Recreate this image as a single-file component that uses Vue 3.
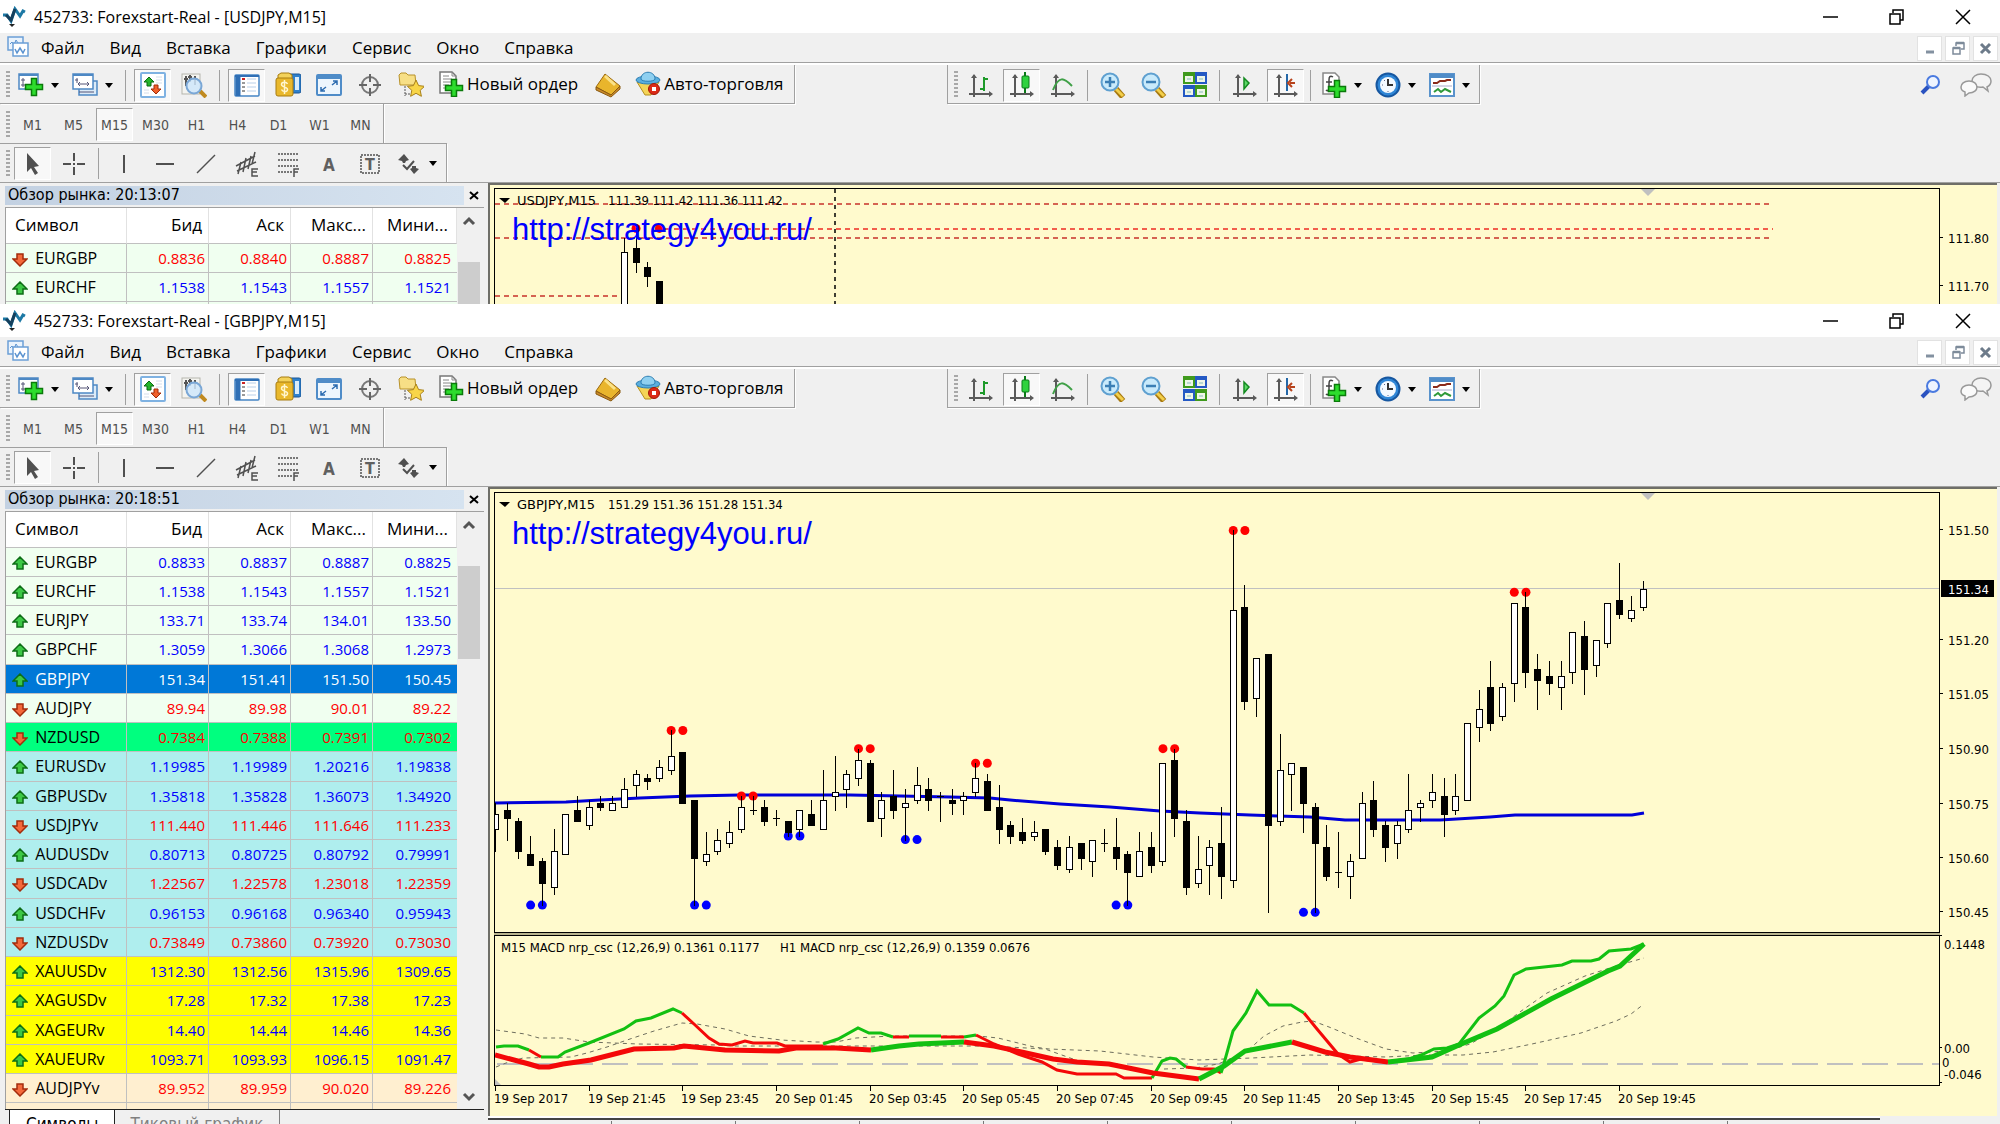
<script setup>
const STEP = 11.71;

// 26x26 toolbar glyphs
const plusShape = 'd="M13.500 8.500h5v6h6v5h-6v6h-5v-6h-6v-5h6z" fill="#2ddc2d" stroke="#0a7a0a" stroke-width="1.500"';
const plus = `<path ${plusShape}/>`;
const axes = '<path d="M6 3v22M1 22h22" stroke="#5a5a5a" stroke-width="2" fill="none"/><path d="M3 6l3-4 3 4zM21 19l4 3-4 3z" fill="#5a5a5a"/>';
const lens = '<path d="M16 17l7 8" stroke="#a87a10" stroke-width="6"/><path d="M16 17l7 7" stroke="#f3cf4a" stroke-width="3"/><circle cx="10" cy="10" r="8.500" fill="#c9eafb" stroke="#5fa0d0" stroke-width="2"/>';
const icons = {
  newChart: `<rect x="1" y="2" width="19" height="15" fill="#fff" stroke="#4d88c4" stroke-width="1.500"/><path d="M1 3h19" stroke="#4d88c4" stroke-width="2"/><path d="M5 6v9M3 13h8M3 8h4" stroke="#557"/><path ${plusShape} transform="translate(0 -2)"/>`,
  profiles: '<rect x="7" y="9" width="18" height="14" fill="#dcebf8" stroke="#4d88c4" stroke-width="1.500"/><rect x="1" y="2" width="20" height="15" fill="#fff" stroke="#4d88c4" stroke-width="1.500"/><path d="M1 3h20" stroke="#4d88c4" stroke-width="2"/><path d="M5 6v5M3 8h3M6 12h11M8 10l-2 2 2 2M15 10l2 2-2 2M7 20h15" stroke="#557" fill="none"/>',
  market: '<rect x="1" y="1" width="24" height="24" rx="1" fill="#fff" stroke="#7fb2e2" stroke-width="2"/><path d="M4 10l5-5 5 5h-3v4H7v-4z" fill="#25b52b" stroke="#0b6a10"/><path d="M11 17l5 5 5-5h-3v-4h-4v4z" fill="#f0602a" stroke="#a02a08"/><path d="M16 5h6M16 8h6M16 11h6M4 18h5M4 21h5" stroke="#d5deea"/>',
  dataWindow: '<rect x="1" y="2" width="18" height="20" fill="#f4f4f0" stroke="#b5b5ad"/><path d="M5 4v10M9 3v7M14 4v9M3 7h4M7 5h4M12 7h4" stroke="#555" stroke-width="2"/><path d="M19 19l6 6" stroke="#c08a20" stroke-width="4"/><circle cx="13" cy="14" r="7.500" fill="#cfe6fa" fill-opacity=".85" stroke="#7aa7d6" stroke-width="2"/>',
  navigator: '<rect x="1" y="3" width="24" height="21" rx="1" fill="#fff" stroke="#4585c5" stroke-width="1.500"/><path d="M4 3v21" stroke="#2f6fb5" stroke-width="5"/><path d="M1 4h24" stroke="#2f6fb5" stroke-width="2"/><path d="M8 7h3" stroke="#c22" stroke-width="2"/><path d="M8 11h3M8 15h3M8 19h3" stroke="#333"/><path d="M13 7h9M13 11h9M13 15h9M13 19h9" stroke="#b9cfe8"/>',
  terminal: '<rect x="9" y="2" width="17" height="19" rx="2" fill="#2f80cc" stroke="#1a5796"/><path d="M20 5h4v13h-4z" fill="#d8ecfb"/><path d="M3 3l3-2h8l3 2v4H3z" fill="#f3d25a" stroke="#a87c10"/><rect x="1" y="6" width="17" height="18" rx="2" fill="#e9b82c" stroke="#a87c10"/><path d="M12.500 12c-1-2.500-6-2.500-6 .5s6 2 6 5-5 2.500-6 0M9.500 8v14" fill="none" stroke="#fff6cf" stroke-width="1.500"/>',
  fullscreen: '<rect x="1" y="3" width="24" height="20" rx="1" fill="#eef6fd" stroke="#4f8cc8" stroke-width="2"/><path d="M1 5h24" stroke="#4f8cc8" stroke-width="4"/><path d="M16 13l5-4M17 9h4v4M10 15l-5 4M9 19H5v-4" fill="none" stroke="#2d6cb0" stroke-width="1.500"/>',
  target: '<circle cx="13" cy="13" r="8" fill="none" stroke="#777" stroke-width="2"/><path d="M13 2v8M13 16v8M2 13h8M16 13h8" stroke="#666" stroke-width="2"/>',
  favorites: '<path d="M1 3l2-2h5l2 2h7l1 10H2z" fill="#f7df86" stroke="#b8922a"/><path d="M7 14v10M7 22h5" stroke="#555" stroke-dasharray="2 1"/><path d="M18 8l2.600 5.600 6 .7-4.400 4 1.200 6-5.400-3-5.400 3 1.200-6-4.400-4 6-.7z" fill="#f8d548" stroke="#a8801a"/>',
  order: '<path d="M2 1h12l4 4v17H2z" fill="#fff" stroke="#777" stroke-width="1.500"/><path d="M14 1v4h4M5 5h6M5 8h9M5 11h9M5 14h6M5 17h5" stroke="#888" fill="none"/>' + plus,
  book: '<path d="M10 2l15 12-9 9L1 15z" fill="#e9b52c" stroke="#9c6a10"/><path d="M1 15l15 8 9-9v3l-9 8L1 18z" fill="#c9892a" stroke="#8a5a10"/><path d="M10 4l10 9" stroke="#fbe288" stroke-width="3"/>',
  expert: '<path d="M2 11h22l-8 13h-6z" fill="#f4d457" stroke="#b58f1e"/><ellipse cx="13" cy="9" rx="12" ry="4" fill="#5aaede" stroke="#2d7eb2"/><path d="M6 8c0-9 14-9 14 0 0 3-14 3-14 0z" fill="#8fd0f0" stroke="#2d7eb2"/><circle cx="19" cy="18" r="5.500" fill="#dc2a16" stroke="#a31608"/><rect x="17" y="16" width="4" height="4" fill="#fff"/>',
  bars: axes + '<path d="M16 5v14M16 7h4M12 17h4" stroke="#1e9a2a" stroke-width="2" fill="none"/>',
  candles: axes + '<path d="M16 0v21" stroke="#0b7a18" stroke-width="2"/><rect x="13" y="4" width="7" height="12" rx="1" fill="#2fd23e" stroke="#0b7a18"/>',
  line: axes + '<path d="M3 18C9 3 14 6 22 14" stroke="#3fa047" stroke-width="2" fill="none"/>',
  zoomIn: lens + '<path d="M10 5v10M5 10h10" stroke="#3b7fb5" stroke-width="2.500"/>',
  zoomOut: lens + '<path d="M5 10h10" stroke="#3b7fb5" stroke-width="2.500"/>',
  tile: '<rect x="1" y="0" width="12" height="12" fill="#3f9a1d"/><rect x="13" y="0" width="12" height="12" fill="#2459c4"/><rect x="1" y="13" width="12" height="12" fill="#2459c4"/><rect x="13" y="13" width="12" height="12" fill="#3f9a1d"/><path d="M3 4h8v6H3zM15 4h8v6h-8zM3 17h8v6H3zM15 17h8v6h-8z" fill="#eef6e8"/><path d="M5 7h4M17 7h4M5 20h4M17 20h4" stroke="#8bb"/>',
  scroll: axes + '<path d="M12 6l5 5-5 6z" fill="#5cd867" stroke="#138a20" stroke-width="1.500"/>',
  shift: axes + '<path d="M14 2v17" stroke="#2468a8" stroke-width="2"/><path d="M22 11h-5M19 7l-4 4 4 4" fill="none" stroke="#b8431c" stroke-width="2"/>',
  indicators: '<path d="M2 1h12l4 4v17H2z" fill="#fff" stroke="#888" stroke-width="1.500"/><path d="M12 5c-3-2-4 0-4 3v8c0 3-2 3-3 2M5 10h6" fill="none" stroke="#444" stroke-width="1.500"/>' + plus,
  clock: '<circle cx="13" cy="13" r="11.500" fill="#2f86d6" stroke="#1757a0" stroke-width="2"/><circle cx="13" cy="13" r="8" fill="#f3f9ff"/><path d="M13 7v6h5" fill="none" stroke="#333" stroke-width="2"/><path d="M7 13h1M13 19v1M9 8l1 1" stroke="#668"/>',
  template: '<rect x="1" y="2" width="24" height="22" fill="#fff" stroke="#5a93cc" stroke-width="2"/><path d="M1 4h24" stroke="#4f8cc8" stroke-width="4"/><path d="M4 11h4l3-2h5l2-1h4" fill="none" stroke="#8a2a1a" stroke-width="2"/><path d="M3 14h20" stroke="#aac"/><path d="M5 20l4-3 3 3 4-3 2 1 4 2" fill="none" stroke="#2f9a3a" stroke-width="2"/>',
  cursor: '<path d="M7 2v19l4-4 4 7 3-2-4-6 5-1z" fill="#505050"/>',
  cross: '<path d="M13 2v8M13 16v8M2 13h8M16 13h8M12 13h2" stroke="#505050" stroke-width="2"/>',
  vline: '<path d="M13 4v18" stroke="#505050" stroke-width="2"/>',
  hline: '<path d="M4 13h18" stroke="#505050" stroke-width="2"/>',
  trend: '<path d="M4 22L22 4" stroke="#505050" stroke-width="1.500"/>',
  channel: '<path d="M2 15L21 5M3 20L22 11M7 11L4 23M12 7L9 21M17 5l-3 13M21 1l-3 12" fill="none" stroke="#505050" stroke-width="1.500"/><path d="M24 18h-6v7h6M18 21h5" fill="none" stroke="#505050" stroke-width="1.500"/>',
  fibo: '<path d="M3 3h20M3 9h20M3 15h20M3 21h14" stroke="#505050" stroke-width="1.500" stroke-dasharray="2 1"/><path d="M19 26v-8h5M19 21h4" fill="none" stroke="#505050" stroke-width="1.500"/>',
  textA: '<text x="13" y="20" text-anchor="middle" font-family="DejaVu Sans Condensed, sans-serif" font-weight="bold" font-size="17" fill="#606060">A</text>',
  textT: '<rect x="4" y="4" width="18" height="18" fill="none" stroke="#505050" stroke-width="1.500" stroke-dasharray="2 1"/><text x="13" y="19" text-anchor="middle" font-family="DejaVu Sans Condensed, sans-serif" font-weight="bold" font-size="16" fill="#606060">T</text>',
  shapes: '<path d="M2 9l6-6 5 6-3 1-1 2H7l-1-2zM14 18l2-1v-2h4v2l3 1-5 5z" fill="#505050"/><path d="M7 14l4 4 7-8" fill="none" stroke="#505050" stroke-width="2"/>',
};

const menu = ["Файл", "Вид", "Вставка", "Графики", "Сервис", "Окно", "Справка"];
const frames = ["M1", "M5", "M15", "M30", "H1", "H4", "D1", "W1", "MN"];

const mainTools = [
  { icon: "newChart", label: "Новый график", drop: true },
  { icon: "profiles", label: "Профили", drop: true },
  { sep: true },
  { icon: "market", label: "Обзор рынка", on: true },
  { icon: "dataWindow", label: "Окно данных" },
  { sep: true },
  { icon: "navigator", label: "Навигатор", on: true },
  { icon: "terminal", label: "Терминал" },
  { icon: "fullscreen", label: "Полный экран" },
  { icon: "target", label: "Перекрестие" },
  { icon: "favorites", label: "Избранное" },
  { icon: "order", text: "Новый ордер" },
  { icon: "book", label: "MetaEditor" },
  { icon: "expert", text: "Авто-торговля" },
];
const chartTools = [
  { icon: "bars", label: "Бары" },
  { icon: "candles", label: "Свечи", on: true },
  { icon: "line", label: "Линия" },
  { sep: true },
  { icon: "zoomIn", label: "Увеличить" },
  { icon: "zoomOut", label: "Уменьшить" },
  { icon: "tile", label: "Расположить окна" },
  { sep: true },
  { icon: "scroll", label: "Автопрокрутка" },
  { icon: "shift", label: "Сдвиг графика", on: true },
  { sep: true },
  { icon: "indicators", label: "Индикаторы", drop: true },
  { icon: "clock", label: "Периоды", drop: true },
  { icon: "template", label: "Шаблоны", drop: true },
];
const drawTools = [
  { icon: "cursor", label: "Курсор", on: true },
  { icon: "cross", label: "Крест" },
  { sep: true },
  { icon: "vline", label: "Вертикальная линия" },
  { icon: "hline", label: "Горизонтальная линия" },
  { icon: "trend", label: "Трендовая линия" },
  { icon: "channel", label: "Канал" },
  { icon: "fibo", label: "Фибоначчи" },
  { icon: "textA", label: "Текст" },
  { icon: "textT", label: "Метка" },
  { icon: "shapes", label: "Фигуры", drop: true },
];

// [open, high, low, close], hundredths above the base price
const gbpjpy = [
  [68, 75, 62, 72], [73, 75, 65, 71], [70, 71, 60, 62], [61, 66, 58, 58], [59, 60, 47, 53],
  [52, 68, 50, 62], [61, 72, 61, 72], [73, 77, 70, 70], [69, 76, 68, 74], [75, 77, 73, 74],
  [73, 77, 73, 75], [74, 82, 74, 79], [80, 84, 77, 83], [82, 83, 79, 81], [82, 87, 81, 85],
  [84, 95, 83, 88], [89, 89, 75, 75], [76, 76, 47, 60], [59, 67, 58, 61], [62, 68, 61, 65],
  [64, 70, 63, 67], [68, 77, 67, 74], [73, 77, 72, 73], [74, 76, 69, 70], [71, 73, 69, 71],
  [70, 70, 66, 67], [68, 73, 66, 73], [72, 76, 69, 69], [68, 84, 68, 76], [77, 88, 73, 78],
  [79, 84, 74, 83], [82, 90, 80, 87], [86, 87, 70, 70], [71, 78, 66, 76], [77, 84, 71, 73],
  [74, 79, 65, 75], [76, 85, 75, 80], [79, 82, 73, 76], [77, 78, 70, 77], [76, 79, 72, 75],
  [76, 78, 72, 77], [78, 86, 77, 82], [81, 83, 73, 73], [74, 80, 64, 68], [69, 70, 64, 66],
  [67, 71, 64, 65], [66, 70, 65, 67], [68, 68, 61, 62], [63, 65, 57, 58], [57, 66, 56, 63],
  [64, 64, 57, 60], [59, 65, 55, 65], [64, 68, 62, 64], [63, 71, 57, 60], [61, 62, 47, 56],
  [55, 67, 55, 62], [63, 67, 56, 58], [59, 86, 58, 86], [87, 90, 66, 71], [70, 73, 50, 52],
  [53, 66, 52, 57], [58, 65, 50, 63], [64, 74, 49, 55], [54, 150, 52, 128], [129, 135, 101, 103],
  [104, 115, 99, 115], [116, 116, 45, 69], [70, 94, 69, 84], [83, 86, 73, 86], [85, 85, 67, 75],
  [74, 75, 45, 64], [63, 69, 54, 55], [56, 67, 52, 56], [55, 61, 49, 59], [60, 78, 60, 75],
  [76, 81, 66, 68], [69, 70, 59, 63], [64, 70, 60, 69], [68, 83, 67, 73], [74, 76, 70, 75],
  [76, 83, 74, 78], [77, 82, 66, 72], [73, 83, 72, 77], [76, 97, 76, 97], [96, 106, 92, 101],
  [107, 114, 95, 97], [99, 108, 98, 107], [108, 130, 103, 130], [129, 133, 107, 111], [112, 116, 101, 109],
  [110, 114, 105, 108], [107, 114, 101, 110], [111, 122, 108, 122], [121, 125, 105, 112], [113, 120, 110, 120],
  [119, 130, 118, 130], [131, 141, 126, 127], [126, 132, 125, 128], [129, 136, 128, 134],
].map((c, i) => [i, ...c]);
const usdjpy = [
  [11, 50, 80, 50, 77],
  [12, 78, 82, 73, 75],
  [13, 74, 75, 70, 72],
  [14, 71, 71, 50, 50],
];

function buildCandles(list, zero, scale) {
  return list.map(([i, open, high, low, close]) => {
    const y = (p) => Math.round(zero - p * scale);
    const top = y(Math.max(open, close));
    const bottom = y(Math.min(open, close));
    return {
      i,
      x: Math.round(i * STEP),
      top,
      height: bottom - top,
      high: y(high),
      low: y(low),
      up: close > open,
    };
  });
}

function buildDots(list, zero, scale) {
  return list.map(([i, p, color]) => ({ x: i * STEP + 0.5, y: zero - p * scale, color }));
}

const RED = "#ff0000";
const BLUE = "#0000ff";
const pairs = (first, price, color) => [[first, price, color], [first + 1, price, color]];
const gbpDots = [
  ...pairs(15, 95, RED), ...pairs(21, 77, RED), ...pairs(31, 90, RED), ...pairs(41, 86, RED),
  ...pairs(57, 90, RED), ...pairs(63, 150, RED), ...pairs(87, 133, RED),
  ...pairs(3, 47, BLUE), ...pairs(17, 47, BLUE), ...pairs(25, 66, BLUE), ...pairs(35, 65, BLUE),
  ...pairs(53, 47, BLUE), ...pairs(69, 45, BLUE),
];

const macdThin = [
  ["g", "1,111 9,110 23,110 34,114"],
  ["r", "34,114 46,121"],
  ["g", "46,121 63,121 70,116 94,107 129,93 141,85 156,82 178,73 187,77"],
  ["r", "187,77 199,88 214,102 224,108 237,109 250,105 258,107 282,107 290,110 328,110"],
  ["g", "328,108 343,103 363,92 374,97 386,97 398,101"],
  ["r", "398,101 414,101"],
  ["g", "414,100 446,100"],
  ["r", "446,101 469,101"],
  ["g", "469,101 481,99"],
  ["r", "481,99 499,108 523,118 547,126 562,134 582,138 621,138 629,142 657,142"],
  ["g", "657,142 667,125 675,122 681,123 691,131"],
  ["r", "691,131 707,133 719,133 726,137"],
  ["g", "726,137 728,131 738,95 751,77 762,55 774,69 796,69 809,77"],
  ["r", "809,77 822,93 843,118 855,126 866,123 891,126"],
  ["g", "891,126 914,123 926,119 939,113 952,112 964,108 984,82 1000,70 1009,60 1019,39 1031,33 1067,29 1077,25 1096,25 1104,23 1114,15 1136,13 1149,8"],
];
const macdThick = [
  ["r", "0,119 34,128 44,131 54,131 68,128 96,124 139,113 179,112 189,110 230,114 284,115 301,112 341,112 376,114"],
  ["g", "376,114 404,110 424,108 469,106"],
  ["r", "469,106 499,110 531,117 558,123 582,126 614,128 658,137 704,143"],
  ["g", "704,143 729,130 750,115 797,106"],
  ["r", "797,106 830,116 855,121 893,126"],
  ["g", "893,126 937,121 964,109 1002,93 1056,63 1113,35 1125,30 1149,8"],
];
const macdSignals = [
  "1,94 30,98 44,102 68,102 94,106 143,108 222,109 238,110 325,110 470,110 495,110 550,113 578,123",
  "1,131 11,127 28,122 76,121 92,117 112,111 135,103 159,95 187,87 202,88 230,93 254,100 286,104 321,106 341,106 361,102 396,100 483,100 503,102 539,111 554,113 605,115 658,121 704,124 730,123 757,122 815,119 891,121 929,119 968,119 998,116 1037,108 1086,97 1121,85 1136,78 1149,68",
  "669,133 700,132 723,128 750,117 769,100 788,90 807,86 818,85 834,91 861,102 891,113 918,117 952,115 975,108 1002,93 1029,73 1052,57 1090,40 1121,30 1149,22",
];
const times = ["19 Sep 2017", "19 Sep 21:45", "19 Sep 23:45", "20 Sep 01:45", "20 Sep 03:45", "20 Sep 05:45", "20 Sep 07:45",
  "20 Sep 09:45", "20 Sep 11:45", "20 Sep 13:45", "20 Sep 15:45", "20 Sep 17:45", "20 Sep 19:45"];

const windows = [
  {
    id: "usdjpy",
    title: "452733: Forexstart-Real - [USDJPY,M15]",
    clock: "20:13:07",
    caption: "USDJPY,M15",
    ohlc: "111.39 111.42 111.36 111.42",
    rows: [
      ["EURGBP", "down", "mint", "0.8836", "0.8840", "0.8887", "0.8825"],
      ["EURCHF", "up", "mint", "1.1538", "1.1543", "1.1557", "1.1521"],
    ],
    filler: "mint",
    candles: buildCandles(usdjpy, 433, 4.8),
    dots: buildDots([[12, 82, RED], [14, 82, RED]], 433, 4.8),
    levels: [
      { x1: 0, x2: 1278, y: 15, color: "#c8322a" },
      { x1: 170, x2: 1278, y: 40, color: "#ee2a22" },
      { x1: 0, x2: 1278, y: 49, color: "#c8322a" },
      { x1: 0, x2: 127, y: 107, color: "#c8322a" },
    ],
    prices: [["111.80", 48], ["111.70", 96]],
  },
  {
    id: "gbpjpy",
    title: "452733: Forexstart-Real - [GBPJPY,M15]",
    clock: "20:18:51",
    caption: "GBPJPY,M15",
    ohlc: "151.29 151.36 151.28 151.34",
    full: true,
    rows: [
      ["EURGBP", "up", "mint", "0.8833", "0.8837", "0.8887", "0.8825"],
      ["EURCHF", "up", "mint", "1.1538", "1.1543", "1.1557", "1.1521"],
      ["EURJPY", "up", "mint", "133.71", "133.74", "134.01", "133.50"],
      ["GBPCHF", "up", "mint", "1.3059", "1.3066", "1.3068", "1.2973"],
      ["GBPJPY", "up", "selected", "151.34", "151.41", "151.50", "150.45"],
      ["AUDJPY", "down", "mint", "89.94", "89.98", "90.01", "89.22"],
      ["NZDUSD", "down", "green", "0.7384", "0.7388", "0.7391", "0.7302"],
      ["EURUSDv", "up", "aqua", "1.19985", "1.19989", "1.20216", "1.19838"],
      ["GBPUSDv", "up", "aqua", "1.35818", "1.35828", "1.36073", "1.34920"],
      ["USDJPYv", "down", "aqua", "111.440", "111.446", "111.646", "111.233"],
      ["AUDUSDv", "up", "aqua", "0.80713", "0.80725", "0.80792", "0.79991"],
      ["USDCADv", "down", "aqua", "1.22567", "1.22578", "1.23018", "1.22359"],
      ["USDCHFv", "up", "aqua", "0.96153", "0.96168", "0.96340", "0.95943"],
      ["NZDUSDv", "down", "aqua", "0.73849", "0.73860", "0.73920", "0.73030"],
      ["XAUUSDv", "up", "yellow", "1312.30", "1312.56", "1315.96", "1309.65"],
      ["XAGUSDv", "up", "yellow", "17.28", "17.32", "17.38", "17.23"],
      ["XAGEURv", "up", "yellow", "14.40", "14.44", "14.46", "14.36"],
      ["XAUEURv", "up", "yellow", "1093.71", "1093.93", "1096.15", "1091.47"],
      ["AUDJPYv", "down", "peach", "89.952", "89.959", "90.020", "89.226"],
    ],
    filler: "peach",
    candles: buildCandles(gbpjpy, 583, 3.637),
    dots: buildDots(gbpDots, 583, 3.637),
    levels: [],
    average: "0,310 71,309 105,307 145,305 195,303 245,302 355,302 405,303 455,304 495,305 515,307 565,311 615,314 665,318 705,320 755,322 815,324 850,327 945,327 995,324 1020,322 1137,322 1149,320",
    prices: [["151.50", 36], ["151.20", 146], ["151.05", 200], ["150.90", 255], ["150.75", 310], ["150.60", 364], ["150.45", 418]],
    last: ["151.34", 96],
  },
];
</script>

<template>
  <section v-for="win in windows" :key="win.id" class="window" :class="{ full: win.full }">
    <header class="titlebar">
      <svg class="logo" width="24" height="22" viewBox="0 0 24 22">
        <path d="M0 9h4l4 6 4-12 5 7 3-5 2 1" fill="none" stroke="#1d79a5" stroke-width="3" />
        <path d="M3 9l5 5 4-11" fill="none" stroke="#153f5c" stroke-width="3" />
        <path d="M6 18h6l-3 3z" fill="#222" />
      </svg>
      <h1>{{ win.title }}</h1>
      <div class="controls">
        <button aria-label="Свернуть"><svg width="16" height="16"><path d="M0 8h15" stroke="#000" stroke-width="1.500" /></svg></button>
        <button aria-label="Восстановить"><svg width="16" height="16"><path d="M1 5h10v10H1zM4 4V1h10v10h-3" fill="none" stroke="#000" stroke-width="1.500" /></svg></button>
        <button aria-label="Закрыть"><svg width="16" height="16"><path d="M1 1l14 14M15 1L1 15" stroke="#000" stroke-width="1.500" /></svg></button>
      </div>
    </header>

    <nav class="menubar">
      <svg class="doc" width="24" height="24" viewBox="0 0 24 24">
        <rect x="1" y="1" width="15" height="13" fill="#eaf3fc" stroke="#6b9fd6" stroke-width="1.500" />
        <path d="M3 8l2-2 2 3 2-5 2 3" fill="none" stroke="#5b93d0" />
        <rect x="6" y="7" width="15" height="13" fill="#fff" stroke="#6b9fd6" stroke-width="1.500" />
        <path d="M8 13l2 4 3-5 3 5 2-4" fill="none" stroke="#5b93d0" stroke-width="1.500" />
      </svg>
      <button v-for="item in menu" :key="item">{{ item }}</button>
      <div class="mdi">
        <button aria-label="Свернуть окно"><svg width="14" height="14"><path d="M3 11h8" stroke="#8391a0" stroke-width="3" /></svg></button>
        <button aria-label="Восстановить окно"><svg width="14" height="14"><path d="M2 7h7v6H2zM5 5V2h8v6h-3" fill="none" stroke="#7d8b9a" stroke-width="1.500" /><path d="M2 7h7M5 2h8" stroke="#7d8b9a" stroke-width="2.500" /></svg></button>
        <button aria-label="Закрыть окно"><svg width="14" height="14"><path d="M2 3l9 9M11 3l-9 9" stroke="#6d7b8a" stroke-width="3" /></svg></button>
      </div>
    </nav>

    <div class="toolrow">
      <div class="toolbar main">
        <i class="grip"></i>
        <template v-for="(tool, n) in mainTools" :key="n">
          <i v-if="tool.sep" class="sep"></i>
          <button v-else class="tool" :class="{ on: tool.on, drop: tool.drop, wide: tool.text }" :aria-label="tool.label">
            <svg width="26" height="26" viewBox="0 0 26 26" v-html="icons[tool.icon]"></svg>
            <span v-if="tool.text">{{ tool.text }}</span>
          </button>
        </template>
      </div>
      <div class="toolbar charts">
        <i class="grip"></i>
        <template v-for="(tool, n) in chartTools" :key="n">
          <i v-if="tool.sep" class="sep"></i>
          <button v-else class="tool" :class="{ on: tool.on, drop: tool.drop }" :aria-label="tool.label">
            <svg width="26" height="26" viewBox="0 0 26 26" v-html="icons[tool.icon]"></svg>
          </button>
        </template>
      </div>
      <div class="extra">
        <button aria-label="Поиск">
          <svg width="22" height="22" viewBox="0 0 22 22"><path d="M2 19l8-8" stroke="#2a52c0" stroke-width="4" /><circle cx="13" cy="8" r="6" fill="#eef4ff" stroke="#4a7ae0" stroke-width="2" /></svg>
        </button>
        <button aria-label="Чат">
          <svg width="32" height="24" viewBox="0 0 32 24">
            <path d="M21 1c6 0 10 3 10 7 0 3-2 5-4 6l1 4-5-4c-7 1-11-2-11-6s4-7 9-7z" fill="#f4f4f4" stroke="#999" stroke-width="1.500" />
            <path d="M9 8c5 0 8 3 8 6s-3 6-8 6l-4 3v-4c-3-1-4-3-4-5 0-3 3-6 8-6z" fill="#fafafa" stroke="#999" stroke-width="1.500" />
          </svg>
        </button>
      </div>
    </div>

    <div class="toolrow">
      <div class="toolbar frames">
        <i class="grip"></i>
        <button v-for="frame in frames" :key="frame" class="tool" :class="{ on: frame === 'M15' }">{{ frame }}</button>
      </div>
    </div>

    <div class="toolrow">
      <div class="toolbar draw">
        <i class="grip"></i>
        <template v-for="(tool, n) in drawTools" :key="n">
          <i v-if="tool.sep" class="sep"></i>
          <button v-else class="tool" :class="{ on: tool.on, drop: tool.drop }" :aria-label="tool.label">
            <svg width="26" height="26" viewBox="0 0 26 26" v-html="icons[tool.icon]"></svg>
          </button>
        </template>
      </div>
    </div>

    <div class="workspace">
      <aside class="watch">
        <div class="watch-head">
          <h2>Обзор рынка: {{ win.clock }}</h2>
          <button aria-label="Закрыть обзор рынка"><svg width="10" height="10"><path d="M1 1l8 7M9 1L1 8" stroke="#000" stroke-width="2" /></svg></button>
        </div>
        <div class="watch-body">
          <div class="list">
            <table>
              <thead>
                <tr>
                  <th>Символ</th>
                  <th>Бид</th>
                  <th>Аск</th>
                  <th>Макс...</th>
                  <th>Мини...</th>
                </tr>
              </thead>
              <tbody>
                <tr v-for="row in win.rows" :key="row[0]" :class="[row[1], row[2]]">
                  <td>
                    <svg width="16" height="15" viewBox="0 0 16 15">
                      <path v-if="row[1] === 'up'" d="M8 1l7 7h-4v5H5V8H1z" fill="#3cc845" stroke="#0d6d16" stroke-width="1.500" />
                      <path v-else d="M8 14l7-7h-4V2H5v5H1z" fill="#f4693a" stroke="#a32c0c" stroke-width="1.500" />
                    </svg>
                    {{ row[0] }}
                  </td>
                  <td v-for="(value, n) in row.slice(3)" :key="n">{{ value }}</td>
                </tr>
                <tr :class="win.filler"><td></td><td></td><td></td><td></td><td></td></tr>
              </tbody>
            </table>
          </div>
          <div class="scrollbar">
            <svg width="24" height="27"><path d="M6 16l5-5 5 5" fill="none" stroke="#555" stroke-width="3" /></svg>
            <div class="thumb"></div>
            <svg v-if="win.full" class="down" width="24" height="27"><path d="M6 12l5 5 5-5" fill="none" stroke="#555" stroke-width="3" /></svg>
          </div>
        </div>
        <div v-if="win.full" class="tabs">
          <button class="active">Символы</button>
          <button>Тиковый график</button>
        </div>
      </aside>

      <main class="chart-area">
        <div class="chart">
          <div class="pane">
            <svg width="100%" height="100%">
              <line v-if="win.last" x1="0" x2="100%" :y1="win.last[1] - 0.5" :y2="win.last[1] - 0.5" stroke="#c0c0c0" />
              <line v-for="(level, n) in win.levels" :key="'l' + n" :x1="level.x1" :x2="level.x2" :y1="level.y" :y2="level.y" :stroke="level.color" stroke-width="1.500" stroke-dasharray="5 4" />
              <line v-if="!win.full" x1="340" x2="340" y1="0" y2="100%" stroke="#000" stroke-width="1.500" stroke-dasharray="4 4" />
              <polyline v-if="win.average" :points="win.average" fill="none" stroke="#0000d8" stroke-width="3" />
              <circle v-for="(dot, n) in win.dots" :key="'d' + n" :cx="dot.x" :cy="dot.y" r="4.500" :fill="dot.color" />
              <g v-for="c in win.candles" :key="c.i" shape-rendering="crispEdges">
                <line :x1="c.x + 0.5" :x2="c.x + 0.5" :y1="c.high" :y2="c.low + 1" stroke="#000" />
                <rect v-if="c.height" :x="c.x - 2.5" :y="c.top + 0.5" width="6" :height="c.height" :fill="c.up ? '#fff' : '#000'" stroke="#000" />
                <line v-else :x1="c.x - 3" :x2="c.x + 4" :y1="c.top + 0.5" :y2="c.top + 0.5" stroke="#000" />
              </g>
              <path d="M1146 0h14l-7 7z" fill="#c0c0c0" />
              <path d="M4 9h11l-5 5z" fill="#000" />
              <text class="caption symbol" x="22" y="16">{{ win.caption }}</text>
              <text class="caption" x="113" y="16">{{ win.ohlc }}</text>
              <text class="site" x="17" y="51">http://strategy4you.ru/</text>
            </svg>
          </div>
          <svg class="axis" width="57" height="100%">
            <g v-for="price in win.prices" :key="price[0]">
              <line x1="0" x2="3" :y1="price[1] + 1.5" :y2="price[1] + 1.5" stroke="#000" />
              <text class="caption" x="8" :y="price[1] + 7">{{ price[0] }}</text>
            </g>
            <g v-if="win.last">
              <rect x="1" :y="win.last[1] - 8" width="53" height="17" fill="#000" />
              <text class="caption light" x="8" :y="win.last[1] + 6">{{ win.last[0] }}</text>
            </g>
          </svg>

          <template v-if="win.full">
            <div class="pane macd">
              <svg width="100%" height="100%">
                <line x1="2" x2="100%" y1="128" y2="128" stroke="#c0c0c0" stroke-width="2" stroke-dasharray="26 9" />
                <polyline v-for="(points, n) in macdSignals" :key="'s' + n" :points="points" fill="none" stroke="#6e6e5e" stroke-width="1" stroke-dasharray="4 4" />
                <polyline v-for="(part, n) in macdThin" :key="'t' + n" :points="part[1]" fill="none" :class="part[0]" stroke-width="3" />
                <polyline v-for="(part, n) in macdThick" :key="'k' + n" :points="part[1]" fill="none" :class="part[0]" stroke-width="5" />
                <path d="M0 143v7h7z" fill="#c0c0c0" />
                <text class="caption" x="6" y="16">M15 MACD nrp_csc (12,26,9) 0.1361 0.1177</text>
                <text class="caption" x="285" y="16">H1 MACD nrp_csc (12,26,9) 0.1359 0.0676</text>
              </svg>
            </div>
            <svg class="axis" width="57" height="100%">
              <path d="M0 2.500h2M0 114.500h2M0 149.500h2" stroke="#000" />
              <text class="caption" x="4" y="16">0.1448</text>
              <text class="caption" x="4" y="120">0.00</text>
              <text class="caption" x="2" y="134">0</text>
              <text class="caption" x="4" y="146">-0.046</text>
            </svg>
            <svg class="times" width="100%" height="30">
              <g v-for="(time, n) in times" :key="time">
                <line :x1="Math.round(n * 8 * STEP) + 1.5" :x2="Math.round(n * 8 * STEP) + 1.5" y1="0" y2="5" stroke="#000" />
                <text class="caption" :x="Math.round(n * 8 * STEP)" y="17">{{ time }}</text>
              </g>
            </svg>
          </template>
        </div>
        <div v-if="win.full" class="chart-tabs"><i v-for="n in 10" :key="n"></i></div>
      </main>
    </div>
  </section>
</template>

<style>
html, body {
  margin: 0;
  height: 100%;
  background: #fff;
}
#app {
  height: 100vh;
  display: flex;
  flex-direction: column;
  overflow: hidden;
}
</style>

<style scoped>
* {
  box-sizing: border-box;
}
.window {
  flex: 0 0 304px;
  display: flex;
  flex-direction: column;
  overflow: hidden;
  background: #f0f0f0;
  font: 17px/20px "Open Sans", "Noto Sans", sans-serif;
  color: #000;
}
.window.full {
  flex: 1 1 0;
}
svg {
  display: block;
  flex: none;
}
button {
  border: 0;
  padding: 0;
  background: none;
  font: inherit;
  color: inherit;
  display: flex;
  align-items: center;
  justify-content: center;
}
h1, h2 {
  margin: 0;
  font: inherit;
}

.titlebar {
  flex: 0 0 33px;
  display: flex;
  align-items: center;
  background: #fff;
  padding: 0 4px 0 3px;
}
.titlebar h1 {
  margin-left: 7px;
  font-size: 16px;
}
.controls {
  display: flex;
  margin-left: auto;
}
.controls button {
  width: 66px;
  height: 30px;
}

.menubar {
  flex: 0 0 32px;
  display: flex;
  align-items: center;
  padding: 0 2px 0 7px;
  border-bottom: 2px solid #fff;
  box-shadow: inset 0 -1px #a0a0a0;
}
.menubar > button {
  margin-right: 25px;
}
.doc {
  margin-right: 10px;
}
.mdi {
  display: flex;
  gap: 3px;
  margin-left: auto;
}
.mdi button {
  width: 25px;
  height: 25px;
  background: #fff;
  border: 1px solid #e2e2e2;
}

.toolrow {
  flex: 0 0 39px;
  display: flex;
}
.toolbar {
  display: flex;
  align-items: center;
  border-right: 1px solid #a0a0a0;
  box-shadow: 1px 1px #fff;
  padding-right: 2px;
}
.toolbar.main,
.toolbar.charts {
  padding-top: 2px;
  border-bottom: 1px solid #a0a0a0;
}
.toolbar.charts {
  margin-left: 152px;
  border-left: 1px solid #a0a0a0;
}
.toolbar.frames {
  padding-top: 2px;
}
.toolbar.draw {
  padding-top: 1px;
  border-top: 1px solid #a0a0a0;
}
.grip {
  width: 4px;
  height: 28px;
  margin: 0 2px 0 6px;
  background: repeating-linear-gradient(#a8a8a8 0 2px, #f0f0f0 2px 4px);
}
.tool {
  width: 37px;
  height: 33px;
  margin: 0 2px;
}
.tool.on {
  background: #f8f8f8;
  border: 1px solid #fff;
  border-top-color: #a0a0a0;
  border-left-color: #a0a0a0;
}
.tool.drop {
  width: 50px;
  justify-content: flex-start;
  padding-left: 4px;
}
.tool.drop::after {
  content: "";
  margin-left: 7px;
  border: 4px solid transparent;
  border-top: 5px solid #000;
  border-bottom: 0;
}
.tool.wide {
  width: auto;
  padding: 0 7px 2px 5px;
  gap: 3px;
}
.sep {
  width: 1px;
  height: 31px;
  margin: 0 4px;
  background: #a0a0a0;
}
.main .sep {
  margin: 0 6px 0 5px;
}
.frames .tool {
  font: 14px/20px "DejaVu Sans Condensed", "DejaVu Sans", sans-serif;
  color: #505050;
}
.extra {
  display: flex;
  gap: 18px;
  align-items: center;
  margin-left: auto;
  padding-right: 8px;
}

.workspace {
  flex: 1;
  min-height: 0;
  display: flex;
  border-top: 1px solid #a0a0a0;
}
.watch {
  flex: 0 0 488px;
  display: flex;
  flex-direction: column;
  min-height: 0;
  padding: 3px 4px 0 5px;
}
.watch-head {
  flex: 0 0 21px;
  display: flex;
  align-items: flex-start;
}
.watch-head h2 {
  flex: 1;
  height: 19px;
  padding-left: 3px;
  background: linear-gradient(90deg, #c3d1e2, #d6e3f0);
  font: 16px/18px "DejaVu Sans Condensed", "DejaVu Sans", sans-serif;
}
.watch-head button {
  width: 20px;
  height: 19px;
}
.watch-body {
  flex: 1;
  min-height: 0;
  display: flex;
  border-top: 1px solid #a0a0a0;
  border-left: 1px solid #a0a0a0;
}
.list {
  width: 452px;
  overflow: hidden;
}
table {
  width: 451px;
  table-layout: fixed;
  border-collapse: separate;
  border-spacing: 0;
  background: #fff;
}
th {
  height: 36px;
  padding: 0 6px 1px 0;
  font-weight: normal;
  text-align: right;
  white-space: nowrap;
  border-right: 1px solid #e2e2e2;
  border-bottom: 1px solid #c0c0c0;
}
th:first-child {
  width: 121px;
  padding-left: 9px;
  text-align: left;
}
th:nth-child(n + 2):nth-child(-n + 4) {
  width: 82px;
}
td {
  height: 29px;
  padding: 0 3px 1px 0;
  font-size: 15px;
  text-align: right;
  border-right: 1px solid #c0c0c0;
  border-bottom: 1px solid #c0c0c0;
}
tr:nth-child(4n) td {
  height: 30px;
}
td:first-child {
  padding-left: 6px;
  font-size: 16px;
  text-align: left;
}
td:first-child svg {
  display: inline-block;
  vertical-align: -3px;
  margin-right: 3px;
}
td:last-child {
  padding-right: 6px;
  border-right: 0;
}
th:last-child {
  padding-right: 8px;
}
.up td {
  color: #0000ff;
}
.down td {
  color: #ff0000;
}
.up td:first-child,
.down td:first-child {
  color: #000;
}
.mint {
  background: #f0fff0;
}
.green {
  background: #00ff7f;
}
.aqua {
  background: #afeeee;
}
.yellow {
  background: #ffff00;
}
.peach {
  background: #ffefd0;
}
.selected {
  background: #0078d7;
}
.selected td,
.selected td:first-child {
  color: #fff;
}
.scrollbar {
  flex: 1;
  display: flex;
  flex-direction: column;
}
.thumb {
  width: 22px;
  height: 93px;
  margin-top: 27px;
  background: #cdcdcd;
}
.down {
  margin-top: auto;
}
.tabs {
  flex: 0 0 15px;
  display: flex;
  align-items: flex-start;
  overflow: hidden;
  padding-left: 4px;
  border-top: 1px solid #222;
  font: 17px/28px "DejaVu Sans Condensed", "DejaVu Sans", sans-serif;
}
.tabs button {
  padding: 0 15px;
  color: #808080;
  border-right: 1px solid #808080;
}
.tabs .active {
  padding: 0 16px;
  background: #fff;
  border: 1px solid #222;
  border-top: 0;
  color: #000;
}

.chart-area {
  flex: 1;
  min-width: 0;
  display: flex;
  flex-direction: column;
  padding-right: 3px;
}
.chart {
  flex: 1;
  min-height: 0;
  display: grid;
  grid-template-columns: minmax(0, 1fr) 57px;
  grid-template-rows: minmax(0, 1fr);
  padding: 3px 0 0 4px;
  background: #fffacd;
  border-top: 2px solid #6e6e68;
  border-left: 2px solid #6e6e68;
}
.full .chart {
  grid-template-rows: minmax(0, 1fr) 153px 30px;
}
.pane {
  min-height: 0;
  border: 1px solid #000;
  border-bottom: 0;
  overflow: hidden;
}
.full .pane {
  border-bottom: 1px solid #000;
}
.pane.macd {
  margin-top: 2px;
  box-shadow: 0 -2px #b8b48e;
}
.axis {
  min-height: 0;
  overflow: hidden;
}
.times {
  grid-column: 1 / 3;
}
.caption {
  font: 13px "DejaVu Sans Condensed", "DejaVu Sans", sans-serif;
  fill: #000;
}
.symbol {
  font-family: "DejaVu Sans", sans-serif;
}
.light {
  fill: #fff;
}
.site {
  font: 31px "Liberation Sans", Arial, sans-serif;
  fill: #0000ff;
}
.g {
  stroke: #12c012;
}
.r {
  stroke: #f40808;
}
.chart-tabs {
  flex: 0 0 8px;
  display: flex;
  align-items: flex-end;
  margin-right: 117px;
  border-top: 2px solid #fff;
  box-shadow: inset 0 2px #444;
}
.chart-tabs i {
  width: 124px;
  height: 3px;
  border-right: 1px solid #777;
}
</style>
